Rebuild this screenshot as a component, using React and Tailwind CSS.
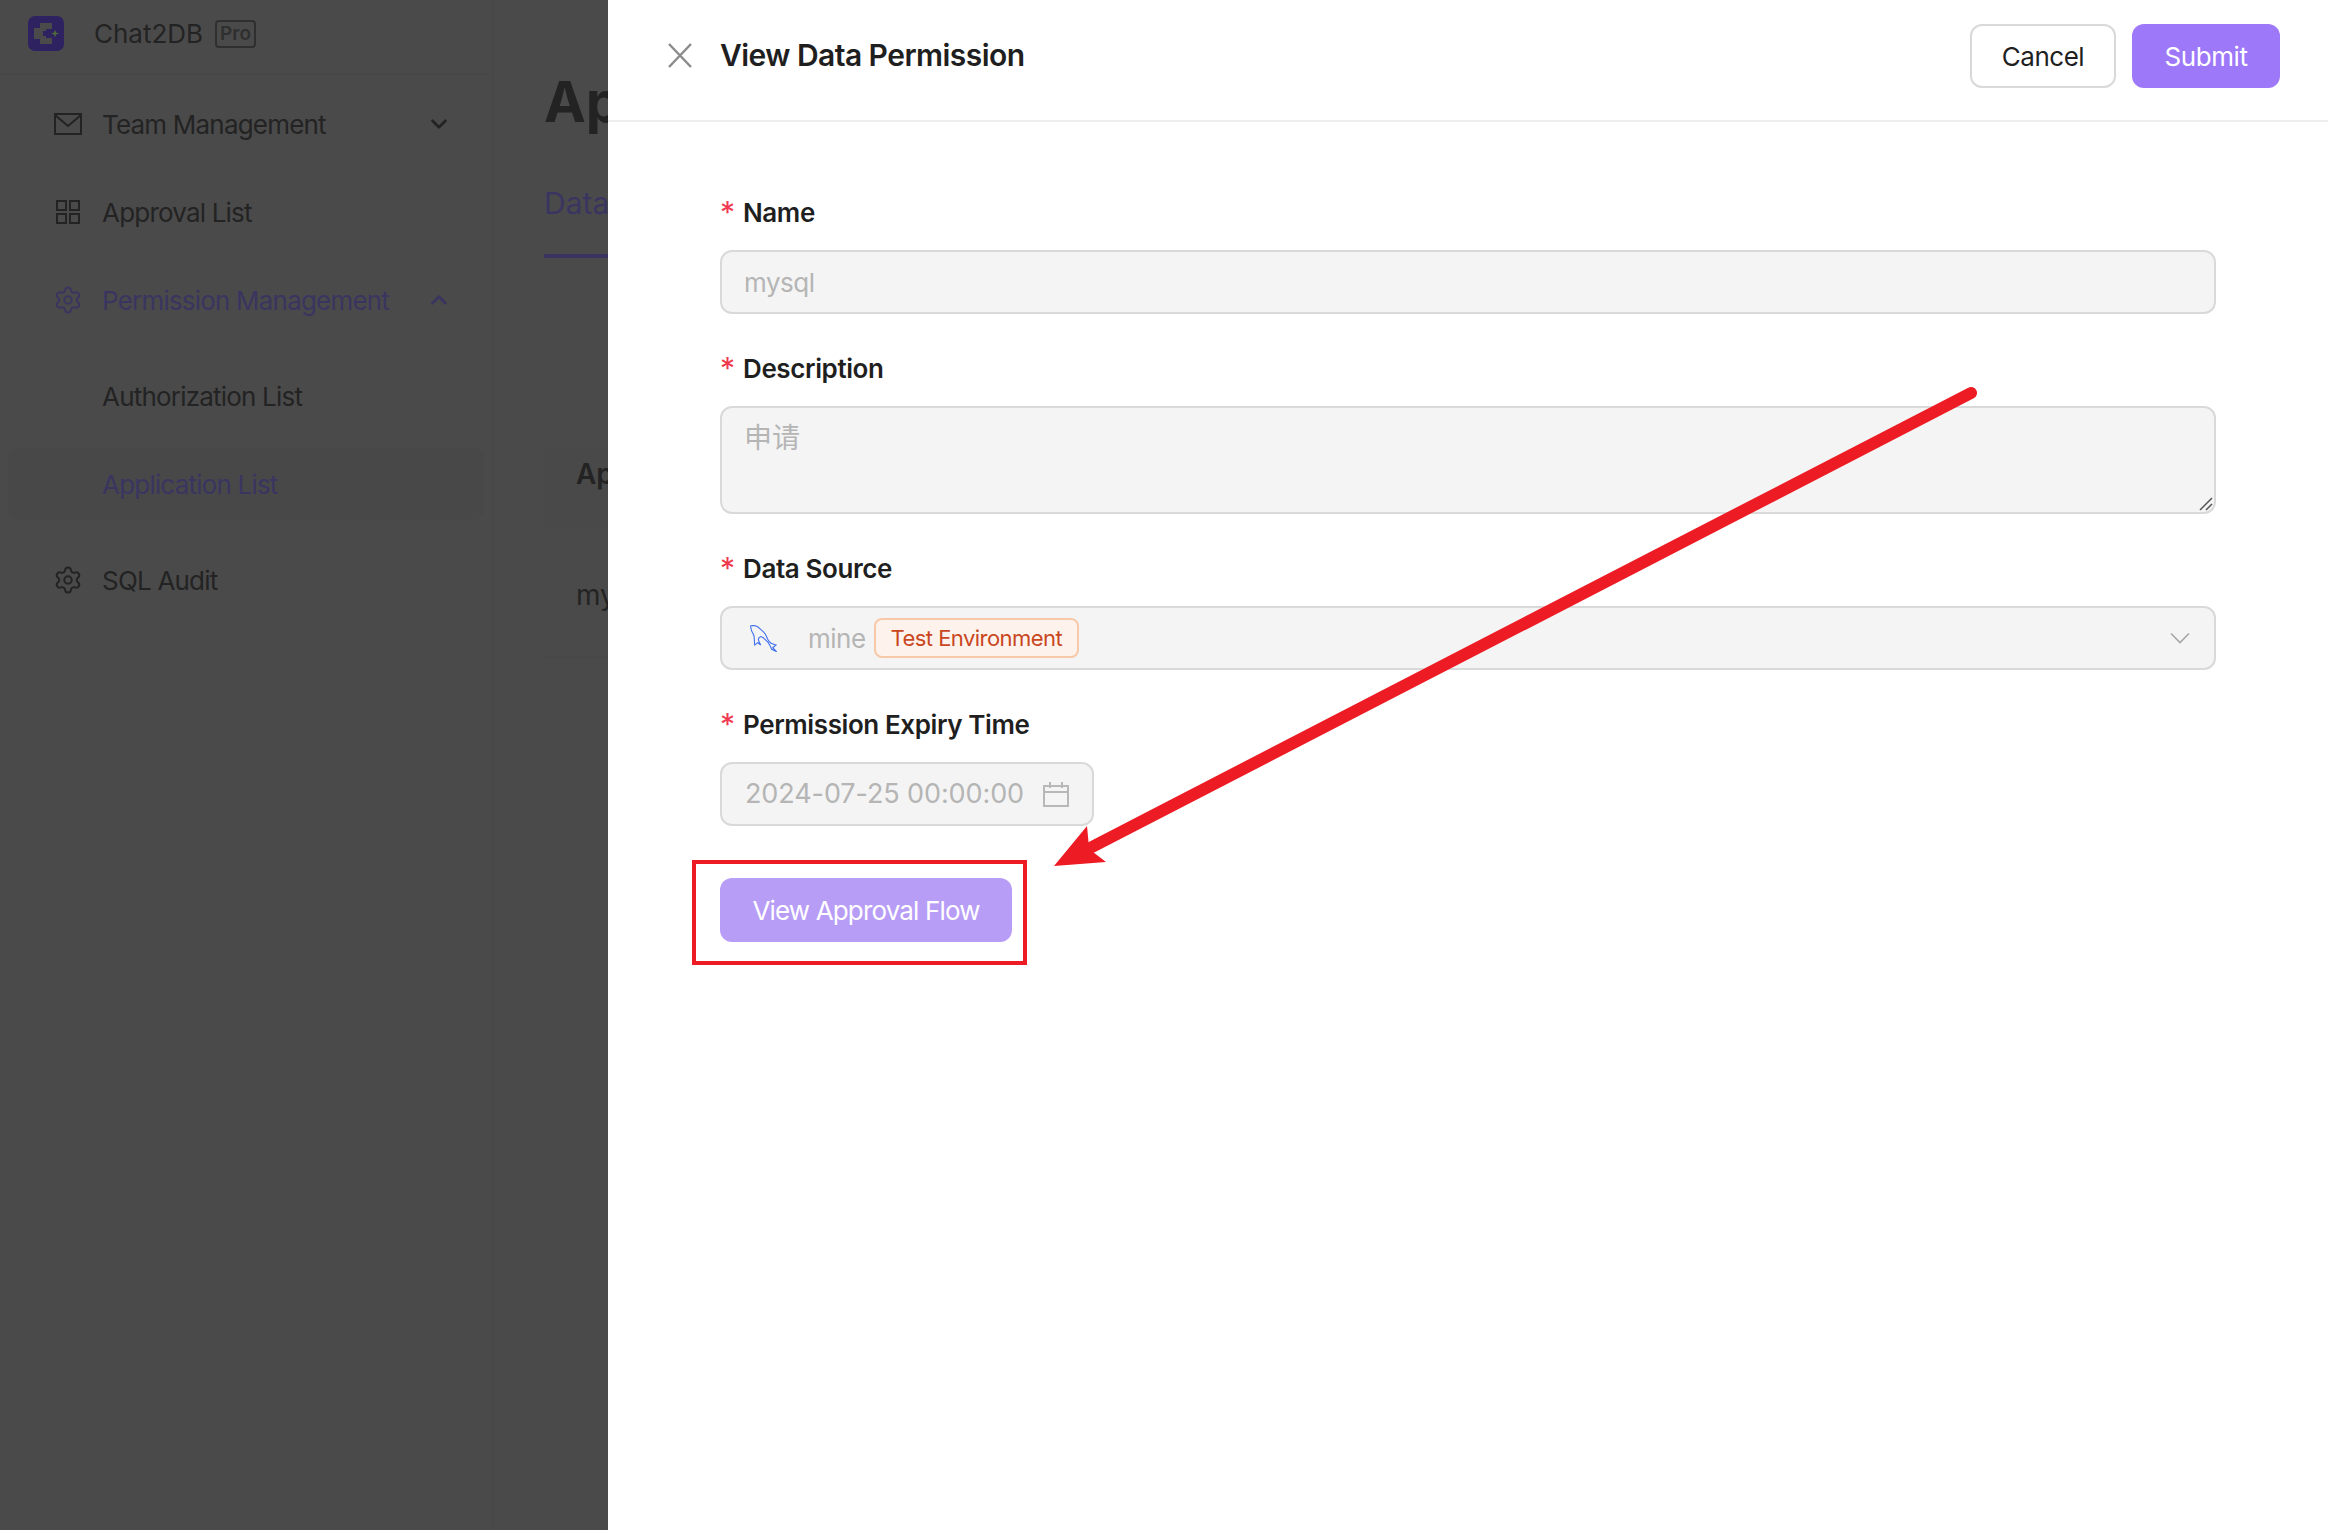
import { Settings, ChevronDown, ChevronUp } from "lucide-react";

const FONT = "font-['Inter','Noto_Sans_CJK_SC',sans-serif]";

function Logo() {
  return (
    <svg width="36" height="35" viewBox="0 0 36 35" className="shrink-0">
      <rect width="36" height="35" rx="7" fill="#2f2260" />
      <path d="M12 7h12v6h-6v2h-3v5h3v2h6v6H12v-5H6v-11h6z" fill="#4a4a4a" />
      <path d="M27 13.500l1 3 3 1-3 1-1 3-1-3-3-1 3-1z" fill="#4f6b3a" />
    </svg>
  );
}

function MailIcon() {
  return (
    <svg width="28" height="22" viewBox="0 0 28 22" fill="none" stroke="currentColor" strokeWidth="2" className="shrink-0">
      <rect x="1" y="1" width="26" height="20" />
      <path d="M1 2l13 11L27 2" />
    </svg>
  );
}

function GridIcon() {
  return (
    <svg width="28" height="24" viewBox="0 0 28 24" fill="none" stroke="currentColor" strokeWidth="2" className="shrink-0">
      <rect x="3" y="1" width="9" height="9" />
      <rect x="16" y="1" width="9" height="9" />
      <rect x="3" y="14" width="9" height="9" />
      <rect x="16" y="14" width="9" height="9" />
    </svg>
  );
}

function Dolphin() {
  return (
    <svg width="27" height="27" viewBox="0 0 27 27" fill="none" stroke="#3f6fee" strokeWidth="1.1" className="shrink-0">
      <path d="M0.500 1L2.700 0.500C4 0.500 5.500 0.800 6.700 1.300C8 2 9.500 3.200 10.700 4.300C12.300 5.700 14 7.200 15 8.700C16.200 10.500 16.800 12.500 17.700 14.300C18.500 15.800 19.500 17 20.700 18C22.300 19 24 19.500 26 20L22.700 22.700L26.700 26.700L21.700 24.300C20.800 22 19.700 19.800 18.300 17.700C17.300 16.500 16 15.200 15 14.300C13.500 13 12.500 12 11 11.500C9.500 12 8.500 13 8.300 14.300C8.500 16.500 9.500 18 10.700 20C9.500 19.300 8.500 18.500 7.700 17.700C6.800 18.500 5.800 19.300 4.700 20C4.300 17 4.500 14 4 11C3.500 9 2.500 7.500 1.700 6C1.200 4.500 0.800 2.800 0.500 1Z" />
    </svg>
  );
}

function CalendarIcon() {
  return (
    <svg width="26" height="25" viewBox="0 0 26 25" fill="none" stroke="#b8b8b8" strokeWidth="2" className="shrink-0">
      <rect x="1" y="4" width="24" height="20" />
      <path d="M1 10h24M7 0v6M19 0v6" />
    </svg>
  );
}

function Field({ label, children }) {
  return (
    <div>
      <div className="flex items-center h-9 mb-5 text-[26px] tracking-[-0.4px] font-semibold text-[#1f1f1f]">
        <span className="w-[23px] text-[30px] text-[#f0384f] font-normal leading-none">*</span>
        {label}
      </div>
      {children}
    </div>
  );
}

const boxClass = "rounded-xl border-2 border-[#d9d9d9] bg-[#f4f4f4] text-[#b5b5b5]";

export default function App() {
  return (
    <div className={`${FONT} relative w-screen h-screen overflow-hidden bg-[#4a4a4a]`}>
      {/* dimmed page behind the drawer */}
      <div className="flex h-full">
        <aside className="w-[494px] h-full border-r-2 border-[#484848] text-[26px] tracking-[-0.8px] whitespace-nowrap text-[#232323]">
          <div className="h-[75px] border-b-2 border-[#484848] pl-7 pb-[6px] flex items-center tracking-normal">
            <Logo />
            <span className="ml-[30px]">Chat2DB</span>
            <span className="ml-3 px-[3px] h-7 leading-[24px] border-2 border-[#2f2f2f] rounded text-[19px] font-semibold text-[#2f2f2f]">Pro</span>
          </div>
          <nav className="mt-[13px] flex flex-col gap-4">
            <div className="h-[72px] flex items-center pl-[54px] pr-[40px]">
              <MailIcon />
              <span className="ml-5 flex-1">Team Management</span>
              <ChevronDown size={26} strokeWidth={2.5} />
            </div>
            <div className="h-[72px] flex items-center pl-[54px] pr-[40px]">
              <GridIcon />
              <span className="ml-5 flex-1">Approval List</span>
            </div>
            <div className="h-[72px] flex items-center pl-[54px] pr-[40px] text-[#3a3560]">
              <Settings size={30} strokeWidth={1.6} className="shrink-0 -ml-[1px]" />
              <span className="ml-[19px] flex-1">Permission Management</span>
              <ChevronUp size={26} strokeWidth={2.5} />
            </div>
            <div className="my-2 flex flex-col gap-4">
              <div className="h-[72px] flex items-center pl-[102px]">Authorization List</div>
              <div className="h-[72px] mx-2 flex items-center pl-[94px] rounded-xl bg-[#484849] text-[#3a3560]">Application List</div>
            </div>
            <div className="h-[72px] flex items-center pl-[54px] pr-[40px]">
              <Settings size={30} strokeWidth={1.6} className="shrink-0 -ml-[1px]" />
              <span className="ml-[19px] flex-1">SQL Audit</span>
            </div>
          </nav>
        </aside>
        <main className="flex-1 pl-[50px] text-[#232323] whitespace-nowrap">
          <h1 className="mt-[66px] text-[56px] leading-[72px] font-bold">Apply</h1>
          <div className="mt-[44px] h-[76px] w-[200px] leading-[42px] border-b-4 border-[#3a3560] text-[#3a3560] text-[30px]">Data</div>
          <div className="mt-[190px] h-[80px] pl-[32px] pb-[28px] flex items-center text-[28px] font-semibold bg-[#494949]">Apply</div>
          <div className="h-[130px] pl-[32px] pt-[6px] flex items-center text-[28px] border-b-2 border-[#484848]">mysql</div>
        </main>
      </div>

      {/* drawer */}
      <div className="absolute top-0 right-0 bottom-0 w-[1720px] bg-white">
        <div className="h-[122px] border-b-2 border-[#eeeeee] pb-[2px] pl-[60px] pr-[48px] flex items-center">
          <svg width="24" height="25" viewBox="0 0 24 25" stroke="#8c8c8c" strokeWidth="2.5" className="shrink-0 -mt-[8px]">
            <path d="M1 1l22 23M23 1L1 24" />
          </svg>
          <h2 className="ml-7 flex-1 text-[30px] tracking-[-0.55px] font-semibold text-[#1f1f1f] -mt-[8px]">View Data Permission</h2>
          <button className="w-[146px] h-16 -mt-[6px] rounded-xl border-2 border-[#d9d9d9] bg-white text-[26px] tracking-[-0.5px] text-[#1f1f1f]">Cancel</button>
          <button className="ml-4 w-[148px] h-16 -mt-[6px] rounded-xl bg-[#9d78f9] text-[26px] tracking-[-0.4px] text-white">Submit</button>
        </div>

        <div className="pt-[72px] px-[112px] flex flex-col gap-9">
          <Field label="Name">
            <input disabled value="mysql" className={`${boxClass} w-full h-16 px-[22px] text-[26px] tracking-[-0.5px]`} />
          </Field>
          <Field label="Description">
            <div className="relative">
              <textarea disabled value="申请" className={`${boxClass} block w-full h-[108px] px-[22px] py-[10px] text-[28px] leading-[40px] resize-none`} />
              <svg width="14" height="14" viewBox="0 0 14 14" stroke="#555555" strokeWidth="1.500" className="absolute right-[3px] bottom-[3px]">
                <path d="M1 13L13 1M7 13l6-6" />
              </svg>
            </div>
          </Field>
          <Field label="Data Source">
            <div className={`${boxClass} h-16 pl-[28px] pr-[24px] flex items-center text-[26px] tracking-[-0.5px]`}>
              <Dolphin />
              <span className="ml-[31px]">mine</span>
              <span className="ml-2 h-10 px-[15px] flex items-center rounded-lg border-2 border-[#f8c9a8] bg-[#fdf3ec] text-[22px] tracking-[-0.55px] text-[#c9461e]">Test Environment</span>
              <svg width="20" height="12" viewBox="0 0 20 12" fill="none" stroke="#a6a6a6" strokeWidth="1.600" className="ml-auto">
                <path d="M1 1.500l9 9 9-9" />
              </svg>
            </div>
          </Field>
          <Field label="Permission Expiry Time">
            <div className={`${boxClass} w-[374px] h-16 pl-[23px] pr-[23px] flex items-center justify-between`}>
              <span className="text-[27px] tracking-[-0.1px]">2024-07-25 00:00:00</span>
              <CalendarIcon />
            </div>
          </Field>
          <button className="mt-4 w-[292px] h-16 rounded-xl bg-[#b89df7] text-[26px] tracking-[-0.85px] text-white">View Approval Flow</button>
        </div>
      </div>

      {/* annotation */}
      <div className="absolute left-[692px] top-[860px] w-[335px] h-[105px] border-4 border-[#ed1c24]" />
      <svg width="2328" height="1530" className="absolute inset-0 pointer-events-none">
        <line x1="1971" y1="393" x2="1092" y2="847" stroke="#ed1c24" strokeWidth="12" strokeLinecap="round" />
        <polygon points="1054,866 1087,826 1088.500,842 1093,852 1106,862" fill="#ed1c24" />
      </svg>
    </div>
  );
}
